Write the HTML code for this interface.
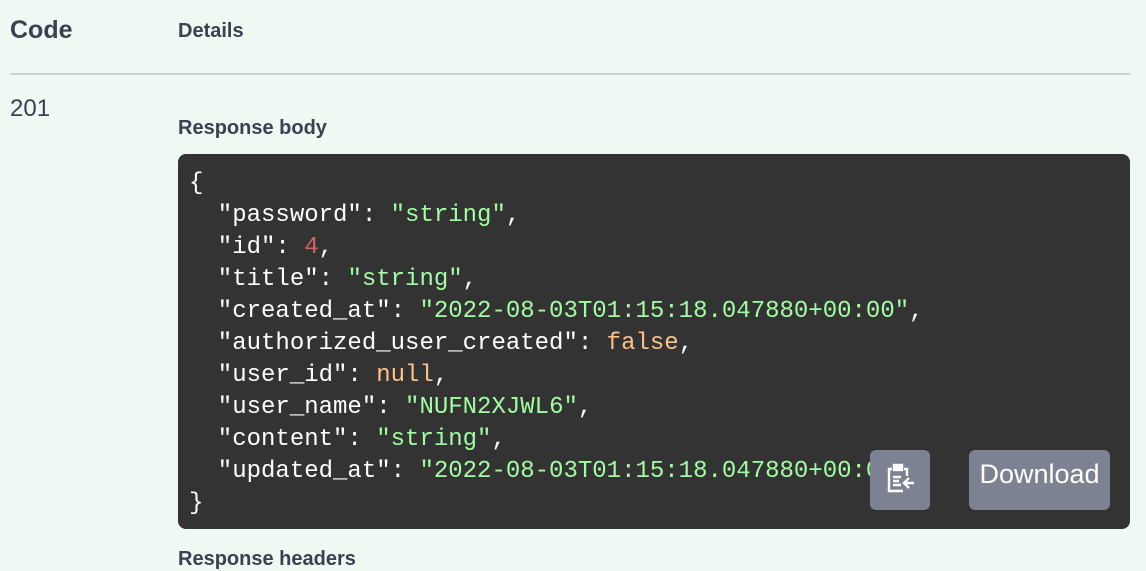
<!DOCTYPE html>
<html><head><style>
body{margin:0;width:1146px;height:558px;background:#eff8f3;font-family:"Liberation Sans",sans-serif;color:#3b4151;position:relative;overflow:hidden}
.a{position:absolute}
pre{margin:0;font-family:"Liberation Mono",monospace;font-size:24px;line-height:32px;color:#fff;font-weight:normal}
.s{color:#a2fca2}.n{color:#d36363}.b{color:#fcc28c}
</style></head><body>
<div class="a" style="left:10px;top:16px;font-size:25px;font-weight:bold">Code</div>
<div class="a" style="left:178px;top:20px;font-size:20px;font-weight:bold">Details</div>
<div class="a" style="left:10px;top:73px;width:1120px;height:2px;background:#c6d8ce"></div>
<div class="a" style="left:10px;top:95px;font-size:24px">201</div>
<div class="a" style="left:178px;top:117px;font-size:20px;font-weight:bold">Response body</div>
<div class="a" style="left:178px;top:154px;width:952px;height:375px;background:#333;border-radius:8px"></div>
<pre class="a" style="left:189px;top:168px">{
  "password": <span class="s">"string"</span>,
  "id": <span class="n">4</span>,
  "title": <span class="s">"string"</span>,
  "created_at": <span class="s">"2022-08-03T01:15:18.047880+00:00"</span>,
  "authorized_user_created": <span class="b">false</span>,
  "user_id": <span class="b">null</span>,
  "user_name": <span class="s">"NUFN2XJWL6"</span>,
  "content": <span class="s">"string"</span>,
  "updated_at": <span class="s">"2022-08-03T01:15:18.047880+00:00"</span>
}</pre>
<div class="a" style="left:870px;top:450px;width:60px;height:60px;background:#7d8293;border-radius:6px">
<svg width="60" height="60" viewBox="0 0 60 60" fill="none" stroke="#fff" stroke-width="2.4">
<path d="M22 19h-3v22h14M34 19h3v7"/><rect x="24" y="15" width="8" height="5" fill="#fff"/>
<path d="M23 27h8M23 31h6M23 35h8M34 33h10M39 28l-5 5 5 5"/></svg></div>
<div class="a" style="left:969px;top:450px;width:141px;height:60px;background:#7d8293;border-radius:6px;color:#fff;font-size:27px;line-height:48px;text-align:center">Download</div>
<div class="a" style="left:178px;top:548px;font-size:20px;font-weight:bold">Response headers</div>
</body></html>
